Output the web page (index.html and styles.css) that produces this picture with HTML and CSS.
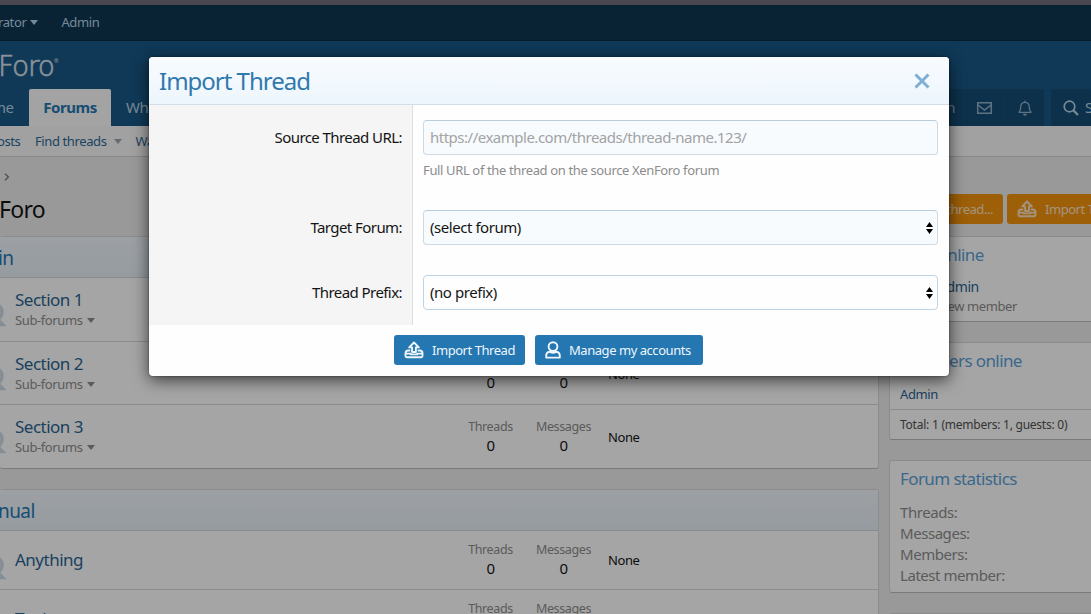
FILE: index.html
```html
<!DOCTYPE html>
<html lang="en">
<head>
    <meta charset="UTF-8">
    <meta name="viewport" content="width=device-width, initial-scale=1.0">
    <title>Import Thread</title>
    <link rel="stylesheet" href="styles.css">
</head>
<body>

    <!-- icons used more than once -->
    <svg width="0" height="0" class="sprite">
        <symbol id="import" viewBox="0 0 20 18">
            <path d="M6.300 9.500H4.200Q1.500 9.500 1.500 12.300V15q0 1.200 1.200 1.200h14.600q1.200 0 1.200-1.200v-2.700q0-2.800-2.700-2.800h-2.100M1.500 12.600h5.200v.8h6.600v-.8h5.200M10 1.500L5.200 6.400h2.900v4.600h3.800V6.400h2.900z" fill="none" stroke="currentColor" stroke-width="1.900" stroke-linejoin="round"/>
        </symbol>
        <symbol id="avatar" viewBox="0 0 16 18">
            <path d="M8 1.200a4.300 4.300 0 1 0 0 8.800a4.300 4.300 0 1 0 0-8.800zM4.800 10.800Q1.200 11.400 1.200 14.800v1.800h13.600v-1.800q0-3.400-3.600-4Q8 12.600 4.800 10.800z" fill="none" stroke="currentColor" stroke-width="1.900" stroke-linejoin="round"/>
        </symbol>
        <symbol id="node" viewBox="0 0 36 36">
            <path d="M22 10c6 0 10 3 10 8c0 4-2 6-4.500 7.500l5 5H16" fill="none" stroke="currentColor" stroke-width="3.500"/>
        </symbol>
    </svg>

    <div class="page">
        <div class="topStrip"></div>
        <div class="staffBar">
            <span class="staffBar-name">rator</span><i class="caret"></i>
            <span class="staffBar-admin">Admin</span>
        </div>

        <header class="header"><span class="logo">Foro</span><sup>&reg;</sup></header>

        <nav class="nav">
            <div class="nav-list">
                <span class="tab tab--home">me</span>
                <span class="tab tab--active">Forums</span>
                <span class="tab tab--new">What's new</span>
            </div>
            <div class="nav-opposite">
                <div class="navGroup">
                    <span class="navLink navLink--user">Admin</span>
                    <span class="navLink">
                        <svg width="17" height="14" viewBox="0 0 17 14"><path d="M1.700 1.700h13.600v10.600H1.700zM2 4l6.500 5L15 4" fill="none" stroke="currentColor" stroke-width="1.500"/></svg>
                    </span>
                    <span class="navLink">
                        <svg width="14" height="16" viewBox="0 0 14 16"><path d="M7 .5v1.500M1 12.300h12Q11.200 10.300 11.200 6.500a4.200 4.200 0 0 0-8.400 0Q2.800 10.300 1 12.300z" fill="none" stroke="currentColor" stroke-width="1.300" stroke-linejoin="round"/><path d="M5 13.700h4a2 2 0 0 1-4 0z" fill="currentColor"/></svg>
                    </span>
                </div>
                <div class="navGroup navGroup--search">
                    <svg width="16" height="16" viewBox="0 0 16 16"><circle cx="6.500" cy="6.500" r="5.300" fill="none" stroke="currentColor" stroke-width="1.700"/><path d="M10.400 10.400L15 15" stroke="currentColor" stroke-width="2.200"/></svg>
                    <span>Search</span>
                </div>
            </div>
        </nav>

        <div class="subNav">
            <span class="subNav-posts">osts</span>
            <span class="subNav-find">Find threads</span><i class="caret caret--light"></i>
            <span class="subNav-watched">Watched</span>
        </div>

        <div class="titleArea">
            <div>
                <svg class="crumb" width="6" height="8" viewBox="0 0 6 8"><path d="M1 .8L4.400 4L1 7.200" fill="none" stroke="currentColor" stroke-width="1.300"/></svg>
                <h1>Foro</h1>
            </div>
            <div class="titleButtons">
                <span class="button button--cta button--post">Post thread...</span>
                <span class="button button--cta button--import"><svg width="20" height="18"><use href="#import"/></svg>Import Thread</span>
            </div>
        </div>

        <div class="columns">
            <main class="main">
                <section class="block">
                    <h2 class="block-header">in</h2>
                    <div class="node">
                        <svg class="node-icon"><use href="#node"/></svg>
                        <div class="node-main"><h3>Section 1</h3><p>Sub-forums<i class="caret"></i></p></div>
                    </div>
                    <div class="node">
                        <svg class="node-icon"><use href="#node"/></svg>
                        <div class="node-main"><h3>Section 2</h3><p>Sub-forums<i class="caret"></i></p></div>
                        <dl class="stat"><dt></dt><dd>0</dd></dl>
                        <dl class="stat stat--messages"><dt></dt><dd>0</dd></dl>
                        <div class="node-extra">None</div>
                    </div>
                    <div class="node">
                        <svg class="node-icon"><use href="#node"/></svg>
                        <div class="node-main"><h3>Section 3</h3><p>Sub-forums<i class="caret"></i></p></div>
                        <dl class="stat"><dt>Threads</dt><dd>0</dd></dl>
                        <dl class="stat stat--messages"><dt>Messages</dt><dd>0</dd></dl>
                        <div class="node-extra">None</div>
                    </div>
                </section>

                <section class="block">
                    <h2 class="block-header">nual</h2>
                    <div class="node node--short">
                        <svg class="node-icon"><use href="#node"/></svg>
                        <div class="node-main"><h3>Anything</h3></div>
                        <dl class="stat"><dt>Threads</dt><dd>0</dd></dl>
                        <dl class="stat stat--messages"><dt>Messages</dt><dd>0</dd></dl>
                        <div class="node-extra">None</div>
                    </div>
                    <div class="node node--short">
                        <svg class="node-icon"><use href="#node"/></svg>
                        <div class="node-main"><h3>Tools</h3></div>
                        <dl class="stat"><dt>Threads</dt><dd>0</dd></dl>
                        <dl class="stat stat--messages"><dt>Messages</dt><dd>0</dd></dl>
                        <div class="node-extra">None</div>
                    </div>
                </section>
            </main>

            <aside class="sidebar">
                <section class="block block--staff">
                    <h3 class="minorHeader">Staff online</h3>
                    <div class="staff"><b>Admin</b><span>New member</span></div>
                </section>
                <section class="block block--members">
                    <h3 class="minorHeader">Members online</h3>
                    <div class="onlineName">Admin</div>
                    <div class="block-footer">Total: 1 (members: 1, guests: 0)</div>
                </section>
                <section class="block block--stats">
                    <h3 class="minorHeader">Forum statistics</h3>
                    <ul>
                        <li>Threads:</li>
                        <li>Messages:</li>
                        <li>Members:</li>
                        <li>Latest member:</li>
                    </ul>
                </section>
                <section class="block block--stats"></section>
            </aside>
        </div>
    </div>

    <div class="overlay-container">
        <div class="overlay">
            <div class="overlay-title">
                <span>Import Thread</span>
                <svg width="16" height="16" viewBox="0 0 16 16"><path d="M1.500 1.500l13 13M14.500 1.500l-13 13" stroke="currentColor" stroke-width="3"/></svg>
            </div>
            <form>
                <div class="formRow formRow--url">
                    <label>Source Thread URL:</label>
                    <div class="formRow-field">
                        <input class="input" type="text" placeholder="https://example.com/threads/thread-name.123/">
                        <p class="explain">Full URL of the thread on the source XenForo forum</p>
                    </div>
                </div>
                <div class="formRow">
                    <label>Target Forum:</label>
                    <div class="formRow-field">
                        <div class="input input--select">(select forum)<svg width="7" height="12" viewBox="0 0 7 12"><path d="M3.500 0L7 5H0zM0 7h7L3.500 12z"/></svg></div>
                    </div>
                </div>
                <div class="formRow">
                    <label>Thread Prefix:</label>
                    <div class="formRow-field">
                        <div class="input input--select input--plain">(no prefix)<svg width="7" height="12" viewBox="0 0 7 12"><path d="M3.500 0L7 5H0zM0 7h7L3.500 12z"/></svg></div>
                    </div>
                </div>
                <div class="formSubmit">
                    <span class="button button--primary"><svg width="20" height="18"><use href="#import"/></svg>Import Thread</span>
                    <span class="button button--primary button--accounts"><svg width="16" height="18"><use href="#avatar"/></svg>Manage my accounts</span>
                </div>
            </form>
        </div>
    </div>

</body>
</html>
```
FILE: styles.css
```css
* {
    box-sizing: border-box;
}

body {
    margin: 0;
    height: 614px;
    overflow: hidden;
    font-family: "Segoe UI", "Noto Sans", sans-serif;
    font-size: 15px;
    line-height: 21px;
    color: #141414;
    background: #ebebeb;
}

body * {
    letter-spacing: -0.03em;
}

h1, h2, h3, p, dl, dd, ul {
    margin: 0;
    padding: 0;
    font-weight: 400;
    list-style: none;
}

.sprite {
    position: absolute;
}

.page {
    height: 614px;
    overflow: hidden;
}

.caret {
    display: inline-block;
    border: 4px solid transparent;
    border-top: 5px solid currentColor;
    border-bottom: 0;
    margin-left: 4px;
    vertical-align: 2px;
}

/* header */
.topStrip {
    height: 5px;
    background: #736d7b;
}

.staffBar {
    display: flex;
    align-items: center;
    height: 36px;
    background: #0f3652;
    border-bottom: 1px solid #0b2940;
    color: #b5d3e8;
    font-size: 13px;
}

.staffBar-name {
    margin-left: -2px;
}

.staffBar-admin {
    margin-left: 23px;
}

.header {
    height: 48px;
    padding-top: 9px;
    background: #185886;
    color: #d5dfe7;
    display: flex;
}

.logo {
    font-family: "DejaVu Sans", sans-serif;
    font-weight: 200;
    font-size: 28px;
    line-height: 33px;
    margin-left: -2px;
    letter-spacing: -0.04em;
    -webkit-text-stroke: 0.7px currentColor;
}

.header sup {
    font-size: 6px;
    line-height: 22px;
}

.nav {
    display: flex;
    justify-content: space-between;
    height: 37px;
    background: #185886;
    color: #b5d3e8;
}

.nav-list, .nav-opposite {
    display: flex;
}

.tab {
    line-height: 37px;
}

.tab--home {
    width: 29px;
    margin-left: -8px;
    margin-right: 8px;
}

.tab--active {
    width: 82px;
    text-align: center;
    font-weight: 700;
    background: #fafafa;
    color: #2577b1;
    border-radius: 2px 2px 0 0;
}

.tab--new {
    padding-left: 15px;
}

.navGroup {
    display: flex;
    align-items: center;
    background: #144c74;
    border-radius: 2px 2px 0 0;
}

.navLink {
    display: flex;
    align-items: center;
    justify-content: center;
    width: 40px;
    height: 37px;
    color: #8fb0c8;
    border-left: 1px solid #164f79;
}

.navLink--user {
    width: 80px;
    padding-right: 9px;
    justify-content: flex-end;
    border: 0;
}

.navGroup--search {
    width: 40px;
    margin-left: 7px;
    padding-left: 12px;
    gap: 6px;
    overflow: hidden;
}

.navGroup--search svg {
    flex: none;
}

.subNav {
    display: flex;
    align-items: center;
    height: 31px;
    background: #f8f8f8;
    border-bottom: 1px solid #d0d0d0;
    color: #2c6996;
    font-size: 13px;
}

.subNav-posts {
    width: 38px;
    margin-left: -3px;
}

.caret--light {
    margin-left: 7px;
    color: #9aa5ae;
}

.subNav-watched {
    margin-left: 14px;
}

.titleArea {
    display: flex;
    justify-content: space-between;
    height: 79px;
}

.crumb {
    display: block;
    margin: 16px 0 0 4px;
    color: #777;
}

.titleArea h1 {
    margin: 13px 0 0 -1px;
    font-size: 23px;
    line-height: 30px;
}

.titleButtons {
    display: flex;
    gap: 4px;
    width: 188px;
    padding-top: 37px;
}

.button {
    display: inline-flex;
    align-items: center;
    flex: none;
    height: 30px;
    padding: 0 10px;
    border-radius: 3px;
    font-size: 13px;
    letter-spacing: -0.035em;
    white-space: nowrap;
}

.button svg {
    flex: none;
    margin-right: 8px;
}

.button--cta {
    background: #f2930d;
    color: #fae3c4;
}

.button--post {
    width: 100px;
    justify-content: flex-end;
}

/* forum list */
.columns {
    display: flex;
    gap: 10px;
}

.main {
    width: 879px;
    flex: none;
}

.block {
    background: #fefefe;
    border: 1px solid #d8d8d8;
    border-bottom-color: #bcbcbc;
    border-radius: 3px;
    margin-bottom: 20px;
}

.main .block {
    border-left: 0;
}

.block-header {
    height: 41px;
    line-height: 42px;
    font-size: 19px;
    margin-left: -2px;
    color: #2577b1;
    background: linear-gradient(#f1f6fb, #e6eff6);
    border-bottom: 1px solid #cfd7dd;
}

.node {
    display: flex;
    height: 64px;
    border-bottom: 1px solid #d8d8d8;
}

.node:nth-of-type(2) {
    height: 63px;
}

.node:last-child {
    border-bottom: 0;
    height: 63px;
}

.node--short, .node--short:last-child {
    height: 59px;
}

.node-icon {
    width: 36px;
    height: 36px;
    margin: 16px 9px 0 -30px;
    color: #ccdae5;
    flex: none;
}

.node-main {
    width: 439px;
    padding-top: 11px;
}

.node--short .node-main {
    padding-top: 18px;
}

.node-main h3 {
    font-size: 17px;
    color: #2a6491;
}

.node-main p {
    font-size: 13px;
    line-height: 20px;
    color: #8c8c8c;
}

.stat {
    width: 73px;
    padding-top: 12px;
    text-align: center;
}

.stat dt {
    height: 19px;
    font-size: 12.5px;
    line-height: 19px;
    color: #8c8c8c;
}

.stat dd {
    line-height: 18px;
}

.node--short .stat {
    padding-top: 9px;
}

.node-extra {
    padding: 22px 0 0 8px;
    font-size: 13px;
}

.node--short .node-extra {
    padding-top: 19px;
}

/* sidebar */
.sidebar {
    width: 250px;
    flex: none;
}

.sidebar .block {
    padding-left: 10px;
}

.minorHeader {
    padding-top: 7px;
    font-size: 17px;
    letter-spacing: -0.035em;
    color: #5ba0d6;
}

.block--staff {
    height: 86px;
}

.staff {
    display: flex;
    flex-direction: column;
    padding: 11px 0 0 38px;
    font-size: 14px;
}

.staff b {
    font-weight: 400;
    color: #2a6491;
}

.staff span {
    font-size: 13px;
    line-height: 19px;
    color: #8c8c8c;
}

.block--members {
    height: 98px;
}

.onlineName {
    margin-top: 13px;
    font-size: 13px;
    color: #2a6491;
}

.block-footer {
    margin: 4px 0 0 -10px;
    padding-left: 10px;
    border-top: 1px solid #d8d8d8;
    font-size: 12px;
    line-height: 29px;
    letter-spacing: -0.02em;
    color: #505050;
}

.block--stats {
    height: 133px;
}

.block--stats ul {
    padding-top: 13px;
    color: #8c8c8c;
}

/* dialog */
.overlay-container {
    position: absolute;
    inset: 0;
    background: rgba(0, 0, 0, 0.35);
    padding-top: 57px;
}

.overlay {
    width: 800px;
    height: 319px;
    margin-left: 149px;
    background: #fefefe;
    border-radius: 4px;
    box-shadow: 0 4px 16px rgba(0, 0, 0, 0.65), 0 0 2px rgba(0, 0, 0, 0.5);
    overflow: hidden;
}

.overlay-title {
    display: flex;
    justify-content: space-between;
    align-items: center;
    height: 48px;
    padding: 0 19px 0 10px;
    font-size: 24px;
    line-height: 48px;
    color: #3079ae;
    background: linear-gradient(#f8fbfe, #edf6fd);
    border-bottom: 1px solid #d3dde5;
}

.overlay-title span {
    letter-spacing: -0.042em;
}

.overlay-title svg {
    color: #7fb0d3;
}

.formRow {
    display: flex;
    height: 65px;
}

.formRow--url {
    height: 90px;
}

.formRow label {
    width: 264px;
    padding: 22px 10px 0 0;
    text-align: right;
    letter-spacing: -0.038em;
    background: #f5f5f5;
    border-right: 1px solid #dcdfe2;
}

.formRow-field {
    flex: 1;
    padding: 15px 11px 0 10px;
}

.input {
    display: block;
    width: 100%;
    height: 35px;
    padding: 0 6px 1px;
    font: inherit;
    background: #f7fbfe;
    border: 1px solid #cfd9e2;
    border-top-color: #b8ccdb;
    border-radius: 4px;
}

.input::placeholder {
    color: #a3a3a3;
    letter-spacing: -0.033em;
}

.input--select {
    display: flex;
    align-items: center;
    justify-content: space-between;
    padding: 0 4px 0 6px;
}

.input--plain {
    background: #fefefe;
    border-color: #bdd5e6;
}

.explain {
    margin-top: 5px;
    font-size: 13px;
    letter-spacing: -0.028em;
    color: #8c8c8c;
}

.formSubmit {
    display: flex;
    gap: 10px;
    padding: 10px 0 0 245px;
}

.button--primary {
    width: 131px;
    background: #2577b1;
    color: #edf6fd;
}

.button--accounts {
    width: 168px;
}
```
